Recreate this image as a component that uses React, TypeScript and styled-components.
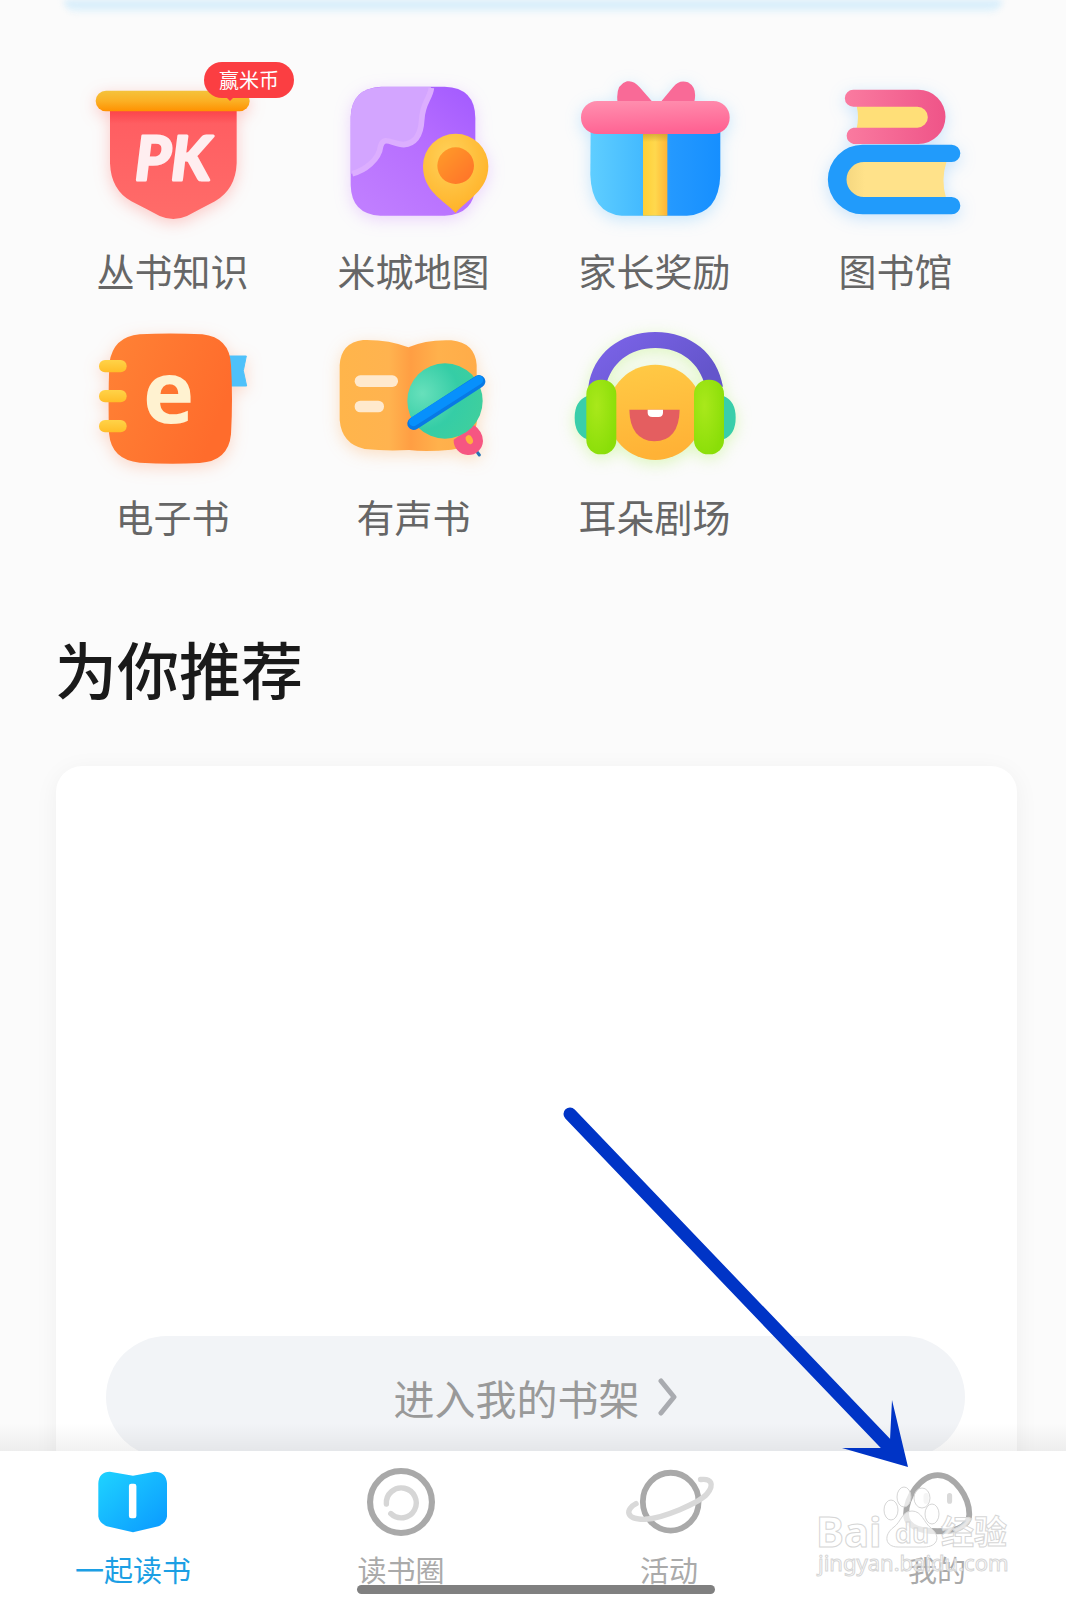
import React from "react";
import styled, { createGlobalStyle } from "styled-components";

const GlobalStyle = createGlobalStyle`
  *, *::before, *::after { box-sizing: border-box; }
  body {
    margin: 0;
    background: #fbfbfb;
    font-family: "Noto Sans CJK SC", "Noto Sans", sans-serif;
  }
`;

const Screen = styled.div`
  position: relative;
  display: flex;
  flex-direction: column;
  height: 100vh;
  overflow: hidden;
`;

const Main = styled.main`
  flex: 1;
  min-height: 0;
  overflow-y: auto;
  scrollbar-width: none;
`;

const BannerGlow = styled.div`
  height: 12px;
  margin: 0 64px;
  border-radius: 0 0 16px 16px;
  background: linear-gradient(#cfeafb, #e8f5fb);
  filter: blur(3px);
`;

const Shortcuts = styled.nav`
  display: grid;
  grid-template-columns: repeat(4, 1fr);
  row-gap: 22px;
  padding: 58px 50px 0 52px;
`;

const Shortcut = styled.a`
  position: relative;
  display: flex;
  flex-direction: column;
  align-items: center;
  gap: 16px;
  color: #666;
  font-size: 38px;
  line-height: 48px;
  text-decoration: none;
`;

const Art = styled.svg<{ $glow: string }>`
  display: block;
  width: 200px;
  height: 160px;
  overflow: visible;
  filter: drop-shadow(0 4px 8px ${(p) => p.$glow});
`;

const Badge = styled.span`
  position: absolute;
  top: -8px;
  left: 152px;
  width: 90px;
  border-radius: 18px;
  background: #fb3e42;
  color: #fff;
  font-size: 20px;
  line-height: 36px;
  text-align: center;

  &::after {
    content: "";
    position: absolute;
    left: 22px;
    top: 35px;
    border: solid transparent;
    border-width: 0 4px;
    border-top: 4px solid #fb3e42;
  }
`;

const Heading = styled.h2`
  margin: 88px 55px 58px;
  color: #1a1a1a;
  font-size: 62px;
  font-weight: 500;
  line-height: 80px;
`;

const ShelfCard = styled.section`
  margin: 0 49px 0 56px;
  padding: 0 52px 48px 50px;
  border-radius: 26px;
  background: #fff;
  box-shadow: 0 4px 24px rgba(0, 0, 0, 0.05);
`;

const ShelfBooks = styled.div`
  min-height: 570px;
`;

const ShelfButton = styled.button`
  display: flex;
  align-items: center;
  justify-content: center;
  gap: 18px;
  width: 100%;
  height: 122px;
  border: 0;
  border-radius: 61px;
  background: #f2f4f7;
  color: #999;
  font: inherit;
  font-size: 41px;
  line-height: 56px;
`;

const TabBar = styled.nav`
  position: relative;
  display: flex;
  justify-content: space-between;
  height: 149px;
  padding: 0 71px 0 75px;
  background: #fff;

  &::before {
    content: "";
    position: absolute;
    inset: -28px 0 auto;
    height: 28px;
    background: linear-gradient(rgba(0, 0, 0, 0), rgba(0, 0, 0, 0.055));
    pointer-events: none;
  }
`;

const Tab = styled.a<{ $active?: boolean }>`
  display: flex;
  flex-direction: column;
  align-items: center;
  gap: 8px;
  width: 116px;
  padding-top: 12px;
  color: ${(p) => (p.$active ? "#1c9fe4" : "#aaa")};
  font-size: 29px;
  line-height: 40px;
  text-decoration: none;
  white-space: nowrap;
`;

const TabIcon = styled.svg`
  display: block;
  width: 102px;
  height: 78px;
`;

const HomeIndicator = styled.div`
  position: absolute;
  bottom: 6px;
  left: 50%;
  width: 358px;
  height: 9px;
  margin-left: -176px;
  border-radius: 5px;
  background: #808080;
`;

const Arrow = styled.svg`
  position: absolute;
  right: 156px;
  bottom: 130px;
  width: 350px;
  height: 370px;
  pointer-events: none;
`;

const Watermark = styled.div`
  position: absolute;
  right: 58px;
  bottom: 16px;
  width: 190px;
  pointer-events: none;
`;

const WatermarkArt = styled.svg`
  display: block;
  width: 100%;
  overflow: visible;
`;

const PkFlag = () => (
  <Art viewBox="40 90 600 480" $glow="rgba(255,90,80,.3)" aria-hidden="true">
    <defs>
      <linearGradient id="pkBar" x2="0" y2="1">
        <stop stopColor="#f4c33c" />
        <stop offset=".5" stopColor="#fbb024" />
        <stop offset="1" stopColor="#ff9100" />
      </linearGradient>
      <linearGradient id="pkBody" x2="0" y2="1">
        <stop stopColor="#fb3f46" />
        <stop offset=".14" stopColor="#ff5e62" />
        <stop offset="1" stopColor="#ff6c69" />
      </linearGradient>
    </defs>
    <path d="M151 205V370Q154 450 215 484Q262 508 300 528Q341 546 382 528Q420 508 466 484Q528 448 531 370V205Z" fill="url(#pkBody)" />
    <rect x="108" y="152" width="462" height="62" rx="31" fill="url(#pkBar)" />
    <text x="226" y="419" fontFamily="Lato, Noto Sans, sans-serif" fontWeight="700" fontStyle="italic" fontSize="186" fill="#ffeef0" stroke="#ffeef0" strokeWidth="9" strokeLinejoin="round">PK</text>
  </Art>
);

const CityMap = () => (
  <Art viewBox="13 30 600 480" $glow="rgba(190,100,255,.25)" aria-hidden="true">
    <defs>
      <linearGradient id="mapBase" x1="1" x2=".2" y2="1">
        <stop stopColor="#a25aff" />
        <stop offset=".45" stopColor="#b66dff" />
        <stop offset="1" stopColor="#c07eff" />
      </linearGradient>
      <radialGradient id="mapPin" cx=".4" cy=".3" r=".8">
        <stop stopColor="#ffd25a" />
        <stop offset="1" stopColor="#ffae22" />
      </radialGradient>
      <linearGradient id="mapDot" y2="1">
        <stop stopColor="#ff9d29" />
        <stop offset="1" stopColor="#ff7029" />
      </linearGradient>
    </defs>
    <path d="M215 80H405Q497 83 497 175V375Q495 463 405 467H212Q125 463 123 375V170Q126 84 215 80Z" fill="url(#mapBase)" />
    <path d="M364 81H215Q126 84 123 170V342C165 332 208 300 213 258C222 226 248 252 282 254C322 250 334 218 336 180C338 128 362 115 364 81Z" fill="#d3a5ff" />
    <path d="M128 341C165 332 208 300 213 258C222 226 248 252 282 254C322 250 334 218 336 180C338 128 362 115 365 84" fill="none" stroke="#dcaeff" strokeWidth="17" />
    <path d="M438 459C400 418 340 394 340 318A98 97 0 0 1 536 318C536 392 470 420 438 459Z" fill="url(#mapPin)" />
    <circle cx="438" cy="317" r="55" fill="url(#mapDot)" />
  </Art>
);

const Gift = () => (
  <Art viewBox="16 30 600 480" $glow="rgba(70,180,255,.28)" aria-hidden="true">
    <defs>
      <linearGradient id="giftBox">
        <stop stopColor="#5fceff" />
        <stop offset=".38" stopColor="#45bbff" />
        <stop offset=".62" stopColor="#2499ff" />
        <stop offset="1" stopColor="#168fff" />
      </linearGradient>
      <linearGradient id="giftLid" x2=".2" y2="1">
        <stop stopColor="#ff91b0" />
        <stop offset="1" stopColor="#ff6393" />
      </linearGradient>
      <linearGradient id="giftRibbon">
        <stop stopColor="#ffcf36" />
        <stop offset=".5" stopColor="#ffd84d" />
        <stop offset="1" stopColor="#ffb436" />
      </linearGradient>
      <linearGradient id="giftShade" x2="0" y2="1">
        <stop stopColor="#c39a31" stopOpacity=".7" />
        <stop offset="1" stopColor="#c39a31" stopOpacity="0" />
      </linearGradient>
    </defs>
    <path d="M123 200H512V345Q508 462 412 467H216Q126 460 122 345Z" fill="url(#giftBox)" />
    <path d="M280 205H353V467H280Z" fill="url(#giftRibbon)" />
    <path d="M280 220H353V246H280Z" fill="url(#giftShade)" />
    <path d="M204 130Q196 74 232 64Q252 60 270 82L312 130ZM330 130L370 82Q388 58 415 67Q445 84 433 130Z" fill="#f96a97" />
    <rect x="94" y="123" width="446" height="99" rx="49" fill="url(#giftLid)" />
  </Art>
);

const Library = () => (
  <Art viewBox="20 30 600 480" $glow="rgba(50,160,255,.25)" aria-hidden="true">
    <defs>
      <linearGradient id="libPink">
        <stop stopColor="#fa7ba0" />
        <stop offset="1" stopColor="#ef5488" />
      </linearGradient>
      <linearGradient id="libPage">
        <stop stopColor="#f4d67f" />
        <stop offset=".2" stopColor="#ffe28a" />
        <stop offset="1" stopColor="#ffe28a" />
      </linearGradient>
    </defs>
    <path d="M202 138H395Q416 144 416 171Q416 200 390 205H202Q210 171 202 138Z" fill="#ffdf78" />
    <path d="M192 89H387A81 81 0 0 1 387 252H192A25 25 0 0 1 192 203H384A31 31 0 0 0 384 140H192A25 25 0 0 1 192 89Z" fill="url(#libPink)" />
    <path d="M215 304H472Q454 360 470 413H215Q165 400 165 359Q165 315 215 304Z" fill="url(#libPage)" />
    <path d="M220 254H487A26 26 0 0 1 487 306H224A52 52 0 0 0 224 411H487A26 26 0 0 1 487 463H220A104 104 0 0 1 220 254Z" fill="#219bfb" />
  </Art>
);

const Ebook = () => (
  <Art viewBox="10 18 600 480" $glow="rgba(255,110,50,.25)" aria-hidden="true">
    <defs>
      <linearGradient id="ebCover" y2=".4">
        <stop stopColor="#ff8235" />
        <stop offset="1" stopColor="#ff6c2c" />
      </linearGradient>
      <linearGradient id="ebRing" x2="0" y2="1">
        <stop stopColor="#ffd348" />
        <stop offset="1" stopColor="#ffbd28" />
      </linearGradient>
    </defs>
    <path d="M470 138H530L521 182L531 228H470Z" fill="#4fc1fa" stroke="#4fc1fa" strokeWidth="3" strokeLinejoin="round" />
    <path d="M210 73Q300 68 398 73Q480 82 484 165Q490 265 484 373Q476 454 390 459Q300 464 210 458Q125 450 118 370Q115 265 119 160Q130 80 210 73Z" fill="url(#ebCover)" />
    {[150, 240, 330].map((y) => (
      <rect key={y} x="88" y={y} width="83" height="37" rx="18" fill="url(#ebRing)" />
    ))}
    <text x="219" y="338" fontFamily="Noto Sans, sans-serif" fontWeight="700" fontSize="260" fill="#fff2d0">e</text>
  </Art>
);

const AudioBook = () => (
  <Art viewBox="13 18 600 480" $glow="rgba(255,150,50,.28)" aria-hidden="true">
    <defs>
      <linearGradient id="abBook">
        <stop stopColor="#ffb54b" />
        <stop offset=".36" stopColor="#ffb34f" />
        <stop offset=".52" stopColor="#ff9e43" />
        <stop offset=".72" stopColor="#ffb14c" />
        <stop offset="1" stopColor="#ffac49" />
      </linearGradient>
      <radialGradient id="abDisc" cx=".2" cy=".4" r=".8">
        <stop stopColor="#67e0bb" />
        <stop offset=".6" stopColor="#35cda6" />
        <stop offset="1" stopColor="#3ecf9e" />
      </radialGradient>
    </defs>
    <path d="M90 165Q94 98 160 90Q235 88 296 112Q350 88 425 91Q496 98 501 165V340Q490 412 425 419Q350 426 298 420Q230 424 165 417Q96 402 90 330Z" fill="url(#abBook)" />
    <rect x="135" y="196" width="130" height="35" rx="17" fill="#ffe9cd" />
    <rect x="135" y="272" width="88" height="35" rx="17" fill="#ffe9cd" />
    <path d="M501 424L509 435" stroke="#2775b5" strokeWidth="9" strokeLinecap="round" />
    <path d="M432 389L493 345Q520 365 520 393A43 43 0 0 1 432 389Z" fill="#f65682" />
    <ellipse cx="479" cy="389" rx="10" ry="14" fill="#ffb13d" transform="rotate(-25 479 389)" />
    <circle cx="406" cy="273" r="113" fill="url(#abDisc)" />
    <path d="M312 341L508 214" stroke="#0879e5" strokeWidth="38" strokeLinecap="round" />
    <path d="M311 335L507 210" stroke="#0790fc" strokeWidth="27" strokeLinecap="round" />
  </Art>
);

const EarTheatre = () => (
  <Art viewBox="16 18 600 480" $glow="rgba(160,240,60,.32)" aria-hidden="true">
    <defs>
      <linearGradient id="etFace" x2=".2" y2="1">
        <stop stopColor="#ffcb46" />
        <stop offset="1" stopColor="#ffb236" />
      </linearGradient>
      <radialGradient id="etPad" cx=".35" cy=".35" r=".7">
        <stop stopColor="#a9e81b" />
        <stop offset="1" stopColor="#8ade08" />
      </radialGradient>
      <linearGradient id="etBand" y2=".5">
        <stop stopColor="#7e65ec" />
        <stop offset="1" stopColor="#6455cb" />
      </linearGradient>
    </defs>
    <path d="M116 230C130 132 210 66 317 66S503 132 520 230H467C450 160 395 114 317 114S184 160 168 230Z" fill="url(#etBand)" />
    <circle cx="317" cy="307" r="143" fill="url(#etFace)" />
    <path d="M112 258Q75 273 75 323T112 388ZM522 258Q558 273 558 323T522 388Z" fill="#39ceaa" />
    <rect x="110" y="209" width="90" height="224" rx="43" fill="url(#etPad)" />
    <rect x="433" y="209" width="90" height="224" rx="43" fill="url(#etPad)" />
    <path d="M239 299H390Q388 392 314 394Q241 390 239 299Z" fill="#e45e60" />
    <path d="M294 299H340V309Q339 321 327 321H308Q295 321 294 309Z" fill="#fff" />
  </Art>
);

const shortcuts = [
  { label: "丛书知识", Icon: PkFlag, badge: "赢米币" },
  { label: "米城地图", Icon: CityMap },
  { label: "家长奖励", Icon: Gift },
  { label: "图书馆", Icon: Library },
  { label: "电子书", Icon: Ebook },
  { label: "有声书", Icon: AudioBook },
  { label: "耳朵剧场", Icon: EarTheatre },
];

const ReadIcon = () => (
  <TabIcon viewBox="0 0 300 228" aria-hidden="true">
    <defs>
      <linearGradient id="readBook" x2="1" y2="1">
        <stop stopColor="#1fd3ff" />
        <stop offset="1" stopColor="#0a98ff" />
      </linearGradient>
    </defs>
    <path d="M48 59Q50 25 82 25L150 37L214 25Q247 25 250 59V157Q248 176 225 185L150 203L73 185Q50 176 48 157Z" fill="url(#readBook)" />
    <rect x="138" y="60" width="22" height="102" rx="7" fill="#fff" />
  </TabIcon>
);

const CircleIcon = () => (
  <TabIcon viewBox="0 0 300 228" fill="none" aria-hidden="true">
    <circle cx="150" cy="114" r="91" stroke="#a9a9a9" strokeWidth="18" />
    <path d="M107 120A44 44 0 1 1 120 148" stroke="#d6d6d6" strokeWidth="16" strokeLinecap="round" />
  </TabIcon>
);

const PlanetIcon = () => (
  <TabIcon viewBox="0 0 300 228" fill="none" aria-hidden="true">
    <ellipse cx="155" cy="113" rx="82" ry="85" stroke="#a9a9a9" strokeWidth="17" />
    <path d="M53 119C22 135 20 166 80 165C130 162 240 117 262 90C284 62 275 44 243 48" stroke="#d9d9d9" strokeWidth="16" strokeLinecap="round" />
  </TabIcon>
);

const MeIcon = () => (
  <TabIcon viewBox="0 0 300 228" fill="none" aria-hidden="true">
    <path d="M152 35C204 35 245 102 245 150C245 186 204 200 152 200S59 186 59 150C59 102 100 35 152 35Z" stroke="#a9a9a9" strokeWidth="17" />
    <path d="M118 95V112M187 95V112" stroke="#d9d9d9" strokeWidth="15" strokeLinecap="round" />
  </TabIcon>
);

const tabs = [
  { label: "一起读书", Icon: ReadIcon, active: true },
  { label: "读书圈", Icon: CircleIcon },
  { label: "活动", Icon: PlanetIcon },
  { label: "我的", Icon: MeIcon },
];

export default function App() {
  return (
    <Screen>
      <GlobalStyle />
      <Main>
        <BannerGlow />
        <Shortcuts>
          {shortcuts.map(({ label, Icon, badge }) => (
            <Shortcut key={label} href="#">
              <Icon />
              {label}
              {badge && <Badge>{badge}</Badge>}
            </Shortcut>
          ))}
        </Shortcuts>
        <Heading>为你推荐</Heading>
        <ShelfCard>
          <ShelfBooks />
          <ShelfButton type="button">
            进入我的书架
            <svg width="20" height="38" viewBox="0 0 20 38" fill="none" aria-hidden="true">
              <path d="M3 3L16 19L3 35" stroke="#a9abb0" strokeWidth="5" strokeLinecap="round" strokeLinejoin="round" />
            </svg>
          </ShelfButton>
        </ShelfCard>
      </Main>
      <TabBar>
        {tabs.map(({ label, Icon, active }) => (
          <Tab key={label} href="#" $active={active}>
            <Icon />
            {label}
          </Tab>
        ))}
        <HomeIndicator />
      </TabBar>
      <Arrow viewBox="560 1100 350 370" aria-hidden="true">
        <path d="M570 1114L886 1444" stroke="#0034c6" strokeWidth="13" strokeLinecap="round" />
        <path d="M908 1467L892 1400L890 1440L882 1448L842 1448Z" fill="#0034c6" />
      </Arrow>
      <Watermark>
        <WatermarkArt viewBox="0 0 190 98" fill="#fff" fillOpacity=".72" stroke="#d6d6d6" strokeWidth="1">
          <g fontFamily="Noto Sans, Noto Sans CJK SC, sans-serif" fontWeight="700">
            <text x="-2" y="61" fontSize="42">Bai</text>
            <text x="123" y="58" fontSize="33" fontFamily="Noto Sans CJK SC, sans-serif">经验</text>
          </g>
          <ellipse cx="73" cy="24" rx="7" ry="10" />
          <ellipse cx="86" cy="11" rx="7" ry="10" />
          <ellipse cx="104" cy="12" rx="8" ry="10" />
          <ellipse cx="114" cy="28" rx="7" ry="10" />
          <path d="M94 25C84 25 83 36 76 41C65 49 67 61 80 61H106C120 61 123 50 113 42C106 37 104 25 94 25Z" />
          <text x="77" y="57" fontSize="27" fontFamily="Noto Sans, sans-serif" fontWeight="600">du</text>
          <text x="0" y="85" fontSize="22" fontFamily="Noto Sans, sans-serif">jingyan.baidu.com</text>
        </WatermarkArt>
      </Watermark>
    </Screen>
  );
}
